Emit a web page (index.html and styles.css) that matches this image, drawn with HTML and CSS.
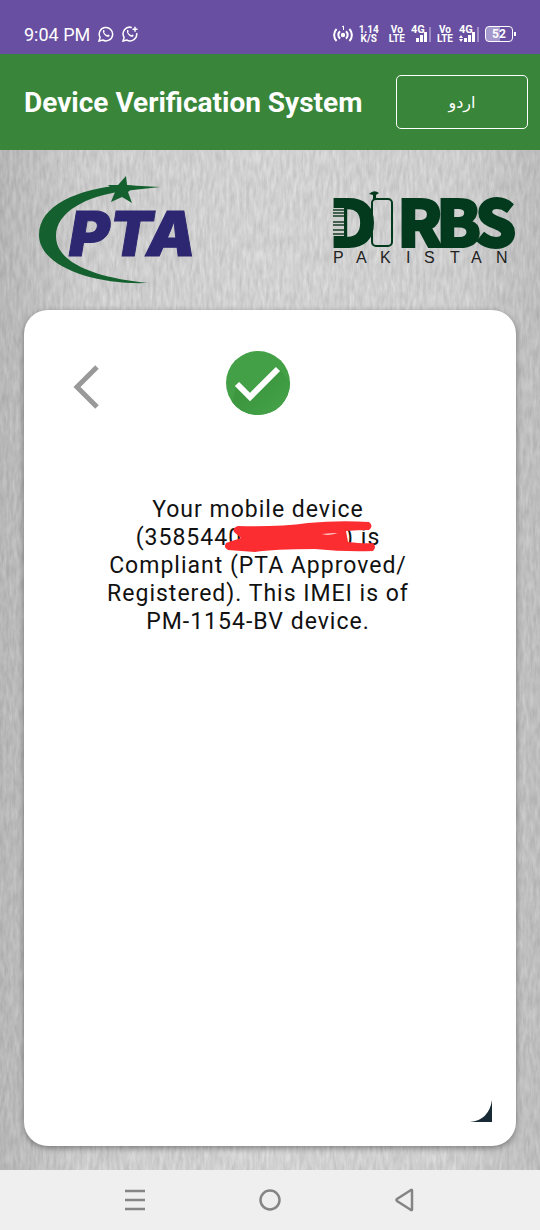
FILE: index.html
```html
<!DOCTYPE html>
<html lang="en">

<head>
    <meta charset="UTF-8">
    <meta name="viewport" content="width=device-width, initial-scale=1.0">
    <title>Device Verification System</title>
    <link rel="stylesheet" href="styles.css">
</head>

<body>
    <div class="status-bar">
        <div class="status-left">
            <span class="clock">9:04 PM</span>
            <svg class="chat-icon" viewBox="0 0 16 16">
                <path d="M1 15l1.1-3.6A6.7 6.7 0 1 1 4.7 14z" />
                <path class="phone" d="M5.1 4.2c.7-.6 1.2-.3 1.6 1l-.6 1c.6 1.3 1.6 2.3 3 3l1-.8c1.5.6 1.8 1 1.3 1.8-2 2.3-7.6-2.5-6.3-6z" />
            </svg>
            <svg class="chat-icon" viewBox="0 0 16 16">
                <path d="M9.8 1.5A6.7 6.7 0 0 0 2.1 11.4L1 15l3.7-1A6.7 6.7 0 0 0 14.6 7M13 .8v5M10.5 3.3h5" />
                <path class="phone" d="M5.1 4.2c.7-.6 1.2-.3 1.6 1l-.6 1c.6 1.3 1.6 2.3 3 3l1-.8c1.5.6 1.8 1 1.3 1.8-2 2.3-7.6-2.5-6.3-6z" />
            </svg>
        </div>
        <div class="status-right">
            <svg class="hotspot" viewBox="0 0 20 18">
                <circle cx="10" cy="10" r="2.2" />
                <path d="M7 6.3a5 5 0 0 0 0 7.4M13 6.3a5 5 0 0 1 0 7.4M3.6 4a8.5 8.5 0 0 0 0 12M16.4 4a8.5 8.5 0 0 1 0 12" />
                <path class="thin" d="M9 2l1.5-1v4" />
            </svg>
            <span class="stack speed"><span>1.14</span><span>K/S</span></span>
            <span class="stack"><span>Vo</span><span>LTE</span></span>
            <span class="signal">
                <span>4G</span>
                <svg viewBox="0 0 20 16">
                    <path d="M5 12h3v4H5zM9 9h3v7H9zM13 6h3v10h-3z" />
                    <path class="dim" d="M18 1h2v15h-2z" />
                </svg>
            </span>
            <span class="stack"><span>Vo</span><span>LTE</span></span>
            <span class="signal">
                <span>4G</span>
                <svg viewBox="0 0 20 16">
                    <path d="M5 12h3v4H5zM9 9h3v7H9zM13 6h3v10h-3zM2 9l2 3H0zM2 16l2-3H0z" />
                    <path class="dim" d="M18 1h2v15h-2z" />
                </svg>
            </span>
            <span class="battery">52</span>
        </div>
    </div>

    <header class="app-bar">
        <h1>Device Verification System</h1>
        <button class="lang-button" lang="ur">اردو</button>
    </header>

    <main class="screen">
        <svg class="texture">
            <defs>
                <filter id="brushed" x="0" y="0" width="100%" height="100%" color-interpolation-filters="sRGB">
                    <feTurbulence type="fractalNoise" baseFrequency="0.3 0.07" numOctaves="3" seed="4" />
                    <feColorMatrix values="0.16 0 0 0 0.74  0.16 0 0 0 0.74  0.16 0 0 0 0.74  0 0 0 0 1" />
                </filter>
                <linearGradient id="edges">
                    <stop offset="0" stop-opacity="0.13" />
                    <stop offset="0.15" stop-opacity="0.03" />
                    <stop offset="0.5" stop-opacity="0" />
                    <stop offset="0.85" stop-opacity="0.02" />
                    <stop offset="1" stop-opacity="0.1" />
                </linearGradient>
            </defs>
            <rect width="100%" height="100%" filter="url(#brushed)" />
            <rect width="100%" height="100%" fill="url(#edges)" />
        </svg>

        <div class="logos">
            <svg class="pta-logo" viewBox="0 0 162 112" role="img" aria-label="PTA">
                <path class="swoosh" d="M122 13L85 11C40 15 1 31 1 61c0 31 54 50 109 48C60 104 18 90 18 62 18 38 48 22 86 17z" />
                <path class="swoosh" d="M88 2l1 9 8 1-7 6 4 11-10-6-11 5 4-10-7-7 10 0z" />
                <text class="pta-text" x="31" y="82">PTA</text>
            </svg>
            <svg class="dirbs-logo" viewBox="0 0 184 78" role="img" aria-label="DIRBS Pakistan">
                <text class="dirbs-text" x="-3 65 104 143" y="59">DRBS</text>
                <path class="barcode-gap" d="M0 20h12v28H0z" />
                <path class="barcode" d="M1 22h11M1 25h11M1 28h11M1 34h11M1 37h11M1 42h11M1 46h11" />
                <rect class="handset" x="40" y="11" width="20" height="47" rx="4" />
                <path class="antenna" d="M37 6q5-5 10-1l-3 2v5h-3V7z" />
                <text class="pakistan-text" x="1 24 48 74 92 118 139 164" y="75">PAKISTAN</text>
            </svg>
        </div>

        <section class="card">
            <div class="card-top">
                <button class="back-button" aria-label="Back">
                    <svg viewBox="0 0 28 44"><path d="M25 2L5 22l20 20" /></svg>
                </button>
                <svg class="check" viewBox="0 0 66 66">
                    <defs>
                        <linearGradient id="shade" x1="0" y1="0" x2="1" y2="1">
                            <stop offset="0.4" stop-color="#3c973f" />
                            <stop offset="0.8" stop-color="#43a047" />
                        </linearGradient>
                    </defs>
                    <circle cx="33" cy="33" r="32" fill="#43a047" />
                    <path d="M25 48L12 35 7 52a32 32 0 0 0 26 13 32 32 0 0 0 32-32L54 18z" fill="url(#shade)" />
                    <path class="tick" d="M12 34l13 13 28-28" />
                </svg>
            </div>
            <p class="message">
                Your mobile device<br>
                <span class="imei">(3585440<span class="hidden-digits"></span>) is
                    <svg class="scribble" viewBox="0 0 152 32">
                        <path d="M14 5Q55 6 84 2Q115-1 145 1Q150 5 145 9Q134 9 122 10L124 21Q140 23 149 22Q153 26 149 30Q120 31 91 28Q50 28 31 31L4 29Q-1 27 2 22L17 17 10 11Q8 7 14 5z" />
                        <path class="gap" d="M98 13q7 2 16-1" />
                    </svg>
                </span><br>
                Compliant (PTA Approved/<br>
                Registered). This IMEI is of<br>
                PM-1154-BV device.
            </p>
            <svg class="corner" viewBox="0 0 22 22"><path d="M22 0v22H0Q19 20 22 0z" /></svg>
        </section>
    </main>

    <nav class="system-nav">
        <button aria-label="Recent apps">
            <svg viewBox="0 0 24 24"><path d="M2 3h20M2 12h20M2 21h20" /></svg>
        </button>
        <button aria-label="Home">
            <svg viewBox="0 0 24 24"><circle cx="12" cy="12" r="9.5" /></svg>
        </button>
        <button aria-label="Back">
            <svg viewBox="0 0 24 24"><path d="M19 2.5v19q0 1-1 .5L4 13q-1-1 0-2L18 2q1-.5 1 .5z" /></svg>
        </button>
    </nav>
</body>

</html>
```

FILE: styles.css
```css
* {
    box-sizing: border-box;
}

body {
    display: flex;
    flex-direction: column;
    min-height: 100vh;
    margin: 0;
    font-family: Roboto, "Liberation Sans", sans-serif;
}

button {
    padding: 0;
    border: none;
    background: none;
    cursor: pointer;
}

svg {
    display: block;
    fill: none;
}

/* phone status bar */
.status-bar {
    display: flex;
    justify-content: space-between;
    align-items: center;
    height: 54px;
    padding: 14px 27px 0 24px;
    background-color: #684fa1;
    color: white;
}

.status-left {
    display: flex;
    align-items: center;
    gap: 8px;
}

.status-right {
    display: flex;
    align-items: center;
    gap: 6px;
}

.clock {
    font-size: 18px;
}

.chat-icon {
    width: 16px;
    height: 16px;
    stroke: white;
    stroke-width: 1.5;
}

.chat-icon .phone {
    fill: white;
    stroke: none;
}

.hotspot {
    width: 20px;
    height: 18px;
    stroke: white;
    stroke-width: 2;
}

.hotspot .thin {
    stroke-width: 1;
}

.hotspot circle {
    fill: white;
    stroke: none;
}

.stack {
    display: flex;
    flex-direction: column;
    align-items: center;
    font-size: 10px;
    font-weight: bold;
    line-height: 9px;
}

.speed {
    margin-right: 4px;
}

.signal {
    position: relative;
    width: 20px;
    font-size: 11px;
    font-weight: bold;
    line-height: 16px;
}

.signal > span {
    position: absolute;
    top: -4px;
    left: 0;
}

.signal svg {
    width: 20px;
    height: 16px;
    fill: white;
}

.signal .dim {
    fill: #9d8cc4;
}

.battery {
    position: relative;
    width: 28px;
    border: 1px solid white;
    border-radius: 4px;
    background: linear-gradient(to right, #a498cc 52%, transparent 52%);
    font-size: 12px;
    font-weight: bold;
    line-height: 14px;
    text-align: center;
}

.battery::after {
    content: "";
    position: absolute;
    top: 5px;
    right: -4px;
    width: 2px;
    height: 4px;
    background-color: white;
}

/* app bar */
.app-bar {
    display: flex;
    justify-content: space-between;
    align-items: center;
    height: 96px;
    padding: 0 12px 0 24px;
    background-color: #39853a;
    color: white;
}

.app-bar h1 {
    margin: 0;
    font-size: 28px;
    white-space: nowrap;
}

.lang-button {
    width: 132px;
    height: 54px;
    border: 1px solid white;
    border-radius: 5px;
    color: white;
    font-family: "DejaVu Sans", sans-serif;
    font-size: 16px;
}

/* main screen */
.screen {
    position: relative;
    flex: 1;
    display: flex;
    flex-direction: column;
    padding: 24px;
    background-color: #c5c5c5;
}

.texture {
    position: absolute;
    top: 0;
    left: 0;
    width: 100%;
    height: 100%;
}

.logos {
    position: relative;
    display: flex;
    justify-content: space-between;
    padding: 0 0 24px 14px;
}

.pta-logo {
    width: 162px;
    height: 112px;
}

.swoosh {
    fill: #14602f;
}

.pta-text {
    fill: #2d2771;
    stroke: #2d2771;
    stroke-width: 1;
    font-family: Inter, "Open Sans", sans-serif;
    font-size: 62px;
    font-style: italic;
    font-weight: 900;
}

.dirbs-logo {
    width: 184px;
    height: 78px;
    margin-top: 14px;
    overflow: visible;
}

.dirbs-text {
    fill: #03391d;
    stroke: #03391d;
    stroke-width: 2;
    font-family: "Noto Sans CJK SC", "Noto Sans", sans-serif;
    font-size: 65px;
    font-weight: 900;
}

.barcode-gap {
    fill: #cecece;
}

.barcode {
    stroke: #44614f;
    stroke-width: 2;
}

.handset {
    stroke: #03391d;
    stroke-width: 2;
}

.antenna {
    fill: #03391d;
}

.pakistan-text {
    fill: #222;
    font-family: "Liberation Sans", sans-serif;
    font-size: 16px;
}

.card {
    position: relative;
    flex: 1;
    display: flex;
    flex-direction: column;
    padding: 40px 24px 24px;
    border-radius: 24px;
    background-color: white;
    box-shadow: 0 2px 6px rgba(0, 0, 0, 0.4);
}

.card-top {
    display: grid;
    grid-template-columns: 1fr auto 1fr;
    align-items: center;
    padding-right: 24px;
}

.back-button {
    justify-self: start;
    margin-left: 24px;
    padding-top: 8px;
}

.back-button svg {
    width: 28px;
    height: 44px;
    stroke: #999;
    stroke-width: 5;
}

.check {
    width: 66px;
    height: 66px;
}

.tick {
    stroke: white;
    stroke-width: 6;
}

.message {
    margin: 80px 24px 0 0;
    color: #111;
    font-size: 23px;
    line-height: 28px;
    letter-spacing: 1px;
    text-align: center;
}

.imei {
    position: relative;
    white-space: nowrap;
}

.hidden-digits {
    display: inline-block;
    width: 103px;
}

.scribble {
    position: absolute;
    top: -3px;
    right: 4px;
    width: 152px;
    height: 32px;
    fill: #fc2d31;
}

.scribble .gap {
    fill: white;
}

.corner {
    width: 22px;
    height: 22px;
    margin: auto 0 0 auto;
    fill: #172a36;
}

/* android buttons */
.system-nav {
    display: flex;
    align-items: center;
    height: 60px;
    padding: 0 12.5%;
    background-color: #efefef;
}

.system-nav button {
    flex: 1;
}

.system-nav svg {
    width: 24px;
    height: 24px;
    margin: 0 auto;
    stroke: #858585;
    stroke-width: 2.5;
}
```
